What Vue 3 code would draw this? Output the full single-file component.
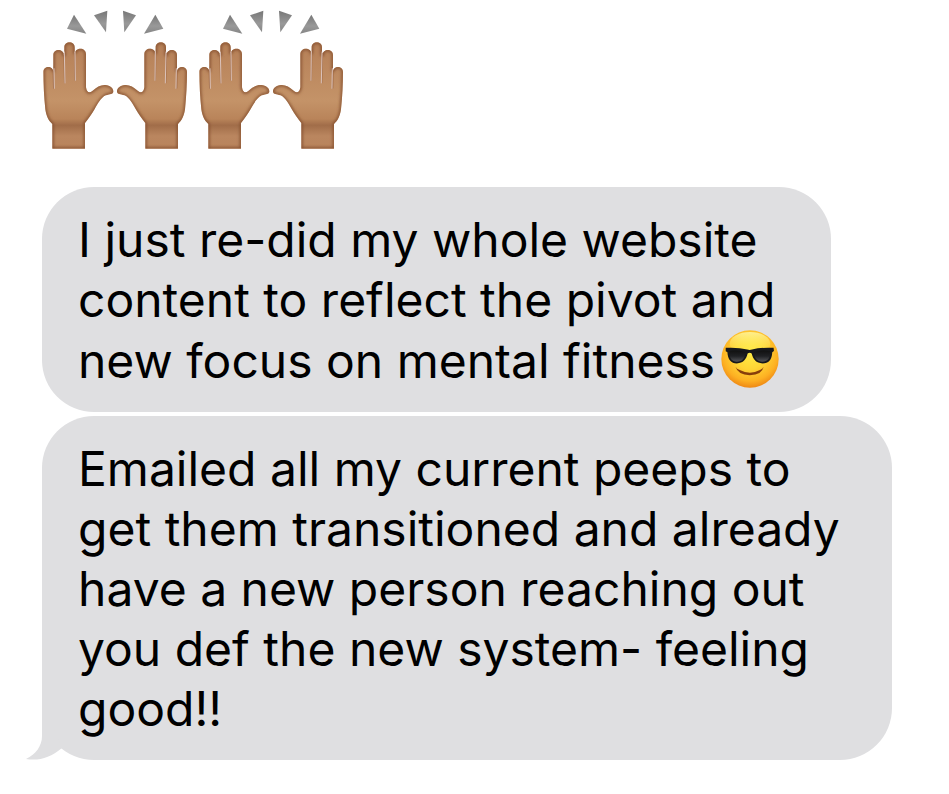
<script setup>
import { ref } from 'vue';

const messages = ref([
  {
    id: 1,
    text: 'I just re-did my whole website\ncontent to reflect the pivot and\nnew focus on mental fitness',
    emoji: true,
    tail: false
  },
  {
    id: 2,
    text: 'Emailed all my current peeps to\nget them transitioned and already\nhave a new person reaching out\nyou def the new system- feeling\ngood!!',
    emoji: false,
    tail: true
  }
]);
</script>

<template>
  <main class="chat">
    <svg class="defs" width="0" height="0" aria-hidden="true">
      <defs>
        <linearGradient id="skin" x1="0" y1="0" x2="0" y2="1">
          <stop offset="0" stop-color="#b57f57" />
          <stop offset="0.55" stop-color="#c49368" />
          <stop offset="0.72" stop-color="#b9845a" />
          <stop offset="0.78" stop-color="#a16d49" />
          <stop offset="0.88" stop-color="#ba865f" />
          <stop offset="1" stop-color="#b9845d" />
        </linearGradient>
        <linearGradient id="spark" x1="0" y1="0" x2="0" y2="1">
          <stop offset="0" stop-color="#777" />
          <stop offset="0.6" stop-color="#999" />
          <stop offset="1" stop-color="#858585" />
        </linearGradient>
        <filter id="shade" x="-5%" y="-5%" width="110%" height="110%">
          <feGaussianBlur stdDeviation="4" />
        </filter>
        <clipPath id="hand-clip">
          <path id="hand-shape" d="M67 446V372C56 362 49 349 46 328C42 290 40 250 40 216C40 196 70 196 70 216V165C70 145 101 145 101 165H103V142C103 122 134 122 134 142V162C136 141 168 141 168 163V262C170 277 178 281 187 273C201 261 212 254 226 255C241 256 251 266 250 275C249 283 240 281 227 286C212 294 204 310 194 327C186 341 176 355 165 369V446Z" />
        </clipPath>
        <g id="hand">
          <use href="#hand-shape" fill="url(#skin)" />
          <g clip-path="url(#hand-clip)">
            <use href="#hand-shape" fill="none" stroke="#85502f" stroke-width="8" filter="url(#shade)" />
          </g>
          <path d="M70 214L71 264M102 160L104 248M134 160L135 240" fill="none" stroke="#a06a45" stroke-width="4" stroke-linecap="round" />
          <path d="M72 206L73 265M103 156L105 249M135 156L136 241" fill="none" stroke="#dcc3bb" stroke-width="3" stroke-linecap="round" />
        </g>
        <g id="hands">
          <g fill="url(#spark)">
            <path d="M132 44L111 86L169 101Z" />
            <path d="M192 46L232 32L228 97Z" />
            <path d="M279 32L318 46L283 97Z" />
            <path d="M376 44L400 86L342 101Z" />
          </g>
          <use href="#hand" />
          <use href="#hand" transform="translate(511 0) scale(-1 1)" />
        </g>
        <radialGradient id="face" cx="0.5" cy="0.4" r="0.62">
          <stop offset="0" stop-color="#ffec45" />
          <stop offset="0.45" stop-color="#ffd535" />
          <stop offset="0.78" stop-color="#fdb022" />
          <stop offset="1" stop-color="#ec8213" />
        </radialGradient>
        <linearGradient id="shine" x1="0" y1="0" x2="0" y2="1">
          <stop offset="0" stop-color="#fff9a8" stop-opacity="0.8" />
          <stop offset="1" stop-color="#fff34d" stop-opacity="0" />
        </linearGradient>
        <linearGradient id="lens" x1="0" y1="0" x2="0" y2="1">
          <stop offset="0" stop-color="#111" />
          <stop offset="0.5" stop-color="#202124" />
          <stop offset="1" stop-color="#55565a" />
        </linearGradient>
      </defs>
    </svg>

    <div class="reaction">
      <svg v-for="n in 2" :key="n" class="hands" viewBox="18 0 468 450" role="img" aria-label="Raised hands">
        <use href="#hands" />
      </svg>
    </div>

    <div v-for="message in messages" :key="message.id" class="bubble">
      <p class="text">{{ message.text }}<svg v-if="message.emoji" class="cool" viewBox="64 33 172 172" role="img" aria-label="Smiling face with sunglasses">
        <circle cx="150" cy="119" r="85" fill="url(#face)" />
        <ellipse cx="150" cy="73" rx="60" ry="34" fill="url(#shine)" />
        <path d="M107 142Q111 149 118 151Q150 168 181 151Q188 148 190 142Q187 166 149 167Q114 166 107 142Z" fill="#873e0b" />
        <path d="M78 86Q115 84 142 91Q149 93 156 91Q183 84 220 86L221 95L216 99C215 122 205 132 187 132C168 132 159 120 155 103Q149 98 143 103C139 120 130 132 111 132C94 132 84 121 83 99L78 96Z" fill="#17181b" />
        <path d="M88 96Q114 91 137 99C135 118 127 127 111 127C96 127 89 117 88 96ZM161 99Q184 91 211 96C210 117 202 127 187 127C171 127 163 117 161 99Z" fill="url(#lens)" />
      </svg></p>
      <svg v-if="message.tail" class="tail" viewBox="0 0 36 60" aria-hidden="true">
        <path d="M16 0V36C16 46 10 54 0 59C13 61 24 58 36 48Z" />
      </svg>
    </div>
  </main>
</template>

<style>
body {
  margin: 0;
  background-color: #fff;
}
</style>

<style scoped>
.chat {
  display: flex;
  flex-direction: column;
  align-items: flex-start;
  gap: 4px;
  padding: 0 42px 34px;
  font-family: Inter, "Liberation Sans", sans-serif;
  color: #000;
}

.defs {
  position: absolute;
}

.reaction {
  display: flex;
  margin: 0 0 33px -6px;
}

.hands {
  width: 156px;
  height: 150px;
}

.bubble {
  position: relative;
  padding: 23px 52px 21px 36px;
  border-radius: 52px;
  background-color: #dfdfe1;
}

.text {
  margin: 0;
  font-size: 48px;
  line-height: 60px;
  white-space: pre-line;
}

.cool {
  width: 58px;
  height: 58px;
  margin-left: 6px;
  vertical-align: -10px;
}

.tail {
  position: absolute;
  left: -16px;
  bottom: 0;
  width: 36px;
  height: 60px;
  fill: #dfdfe1;
}
</style>
